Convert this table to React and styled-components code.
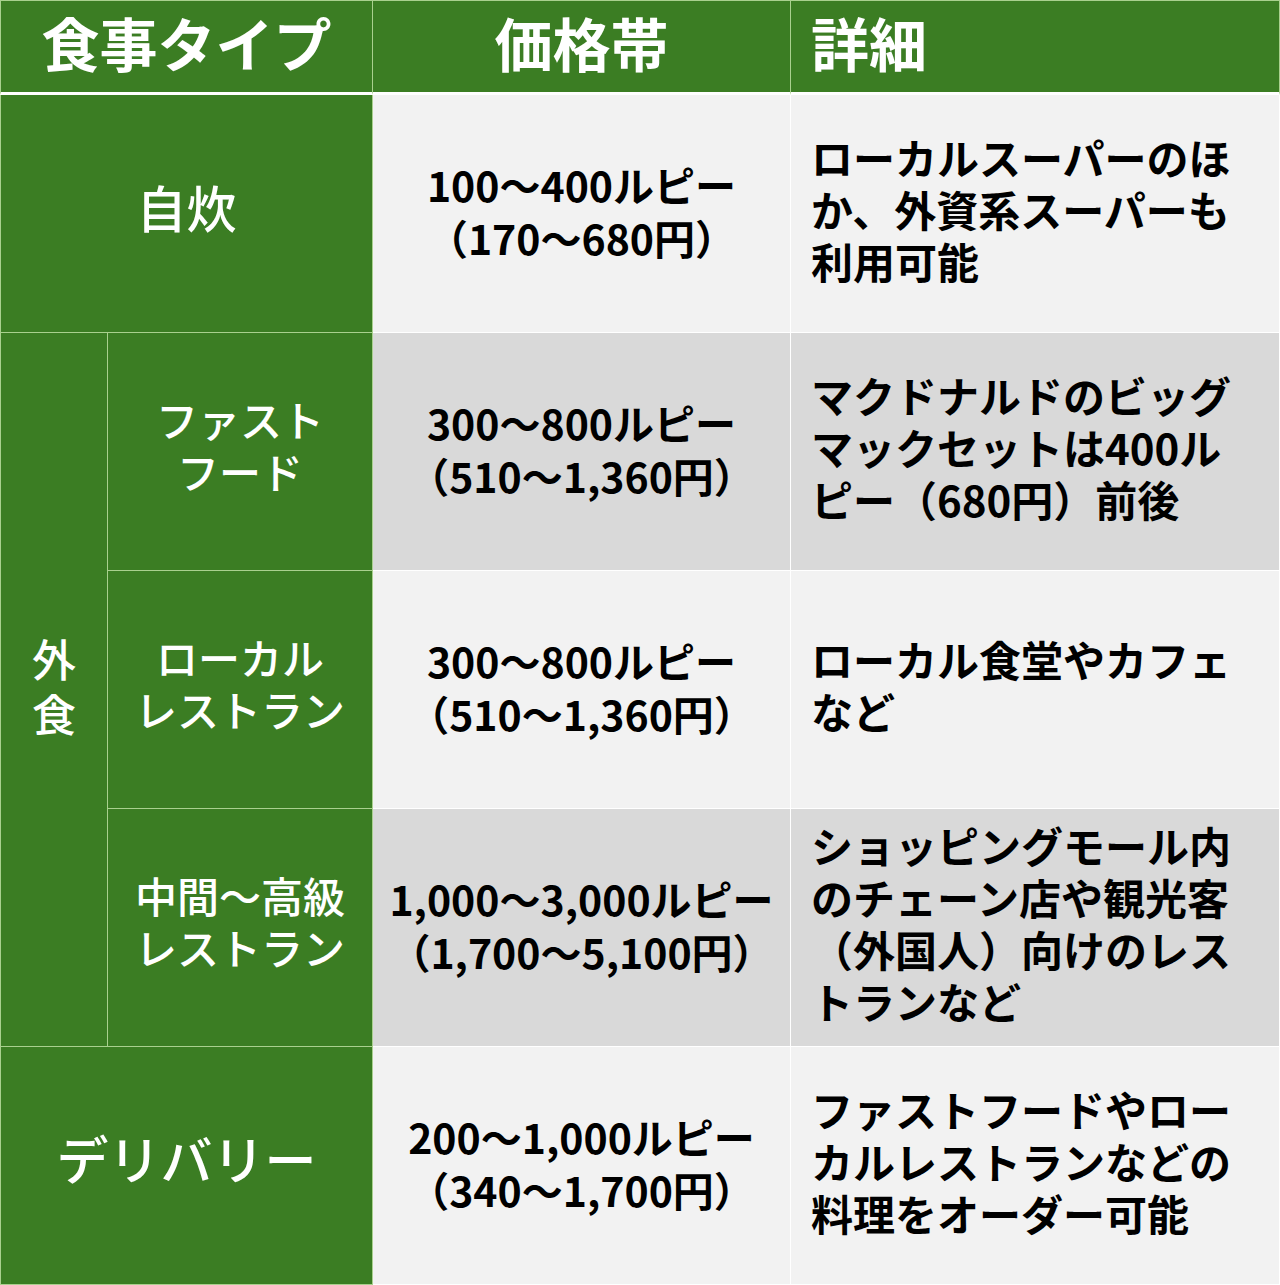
import React from "react";
import styled, { createGlobalStyle } from "styled-components";

const GREEN = "#3b7d23";
const GREEN_LINE = "#a9d08e";

const GlobalStyle = createGlobalStyle`
  html, body {
    margin: 0;
    padding: 0;
    background: #ffffff;
  }
  body {
    font-family: "Noto Sans CJK JP", "Noto Sans", sans-serif;
  }
`;

const Table = styled.div`
  display: grid;
  grid-template-columns: 108px 265px 418px 489px;
  grid-template-rows: 95px repeat(5, 238px);
  width: 1280px;
`;

const HeadCell = styled.div`
  box-sizing: border-box;
  grid-column: ${(props) => props.span || "auto"};
  background: ${GREEN};
  color: #fff;
  font-size: 58px;
  font-weight: 700;
  line-height: 1;
  display: flex;
  align-items: center;
  justify-content: ${(props) => (props.left ? "flex-start" : "center")};
  padding: ${(props) => (props.left ? "0 0 10px 20px" : "0 0 10px")};
  border-top: 1px solid ${GREEN_LINE};
  border-right: 1px solid ${GREEN_LINE};
  border-left: ${(props) => (props.first ? `1px solid ${GREEN_LINE}` : "none")};
  border-bottom: 3px solid #ffffff;
`;

const TypeCell = styled.div`
  box-sizing: border-box;
  grid-column: ${(props) => props.col || "auto"};
  grid-row: ${(props) => props.row || "auto"};
  background: ${GREEN};
  color: #fff;
  font-size: ${(props) => props.size || 42}px;
  font-weight: 500;
  line-height: ${(props) => props.lh || 52}px;
  text-align: center;
  display: flex;
  flex-direction: column;
  align-items: center;
  justify-content: center;
  padding-bottom: ${(props) => props.lift || 14}px;
  border-right: 1px solid ${GREEN_LINE};
  border-bottom: 1px solid ${GREEN_LINE};
  border-left: ${(props) => (props.first ? `1px solid ${GREEN_LINE}` : "none")};
`;

const DataCell = styled.div`
  box-sizing: border-box;
  background: ${(props) => (props.dark ? "#d9d9d9" : "#f2f2f2")};
  color: #000;
  font-weight: 700;
  display: flex;
  flex-direction: column;
  justify-content: center;
  border-right: 1px solid #ffffff;
  border-bottom: 1px solid #ffffff;
`;

const PriceCell = styled(DataCell)`
  align-items: center;
  text-align: center;
  font-size: 41px;
  line-height: 53px;
  padding-bottom: 6px;
`;

const DetailCell = styled(DataCell)`
  padding: 0 22px 10px 20px;
  font-size: 42px;
  line-height: 52px;
  word-break: break-all;
`;

const Line = styled.span`
  display: block;
  white-space: nowrap;
`;

const rows = [
  {
    price: ["100〜400ルピー", "（170〜680円）"],
    detail: "ローカルスーパーのほか、外資系スーパーも利用可能",
  },
  {
    name: ["ファスト", "フード"],
    price: ["300〜800ルピー", "（510〜1,360円）"],
    detail: "マクドナルドのビッグマックセットは400ルピー（680円）前後",
  },
  {
    name: ["ローカル", "レストラン"],
    price: ["300〜800ルピー", "（510〜1,360円）"],
    detail: "ローカル食堂やカフェなど",
  },
  {
    name: ["中間〜高級", "レストラン"],
    price: ["1,000〜3,000ルピー", "（1,700〜5,100円）"],
    detail: "ショッピングモール内のチェーン店や観光客（外国人）向けのレストランなど",
  },
  {
    price: ["200〜1,000ルピー", "（340〜1,700円）"],
    detail: "ファストフードやローカルレストランなどの料理をオーダー可能",
  },
];

function Lines({ items }) {
  return items.map((t) => <Line key={t}>{t}</Line>);
}

export default function App() {
  return (
    <>
      <GlobalStyle />
      <Table>
        <HeadCell span="span 2" first>
          食事タイプ
        </HeadCell>
        <HeadCell>価格帯</HeadCell>
        <HeadCell left>詳細</HeadCell>

        <TypeCell col="1 / span 2" row="2" size={50} lift={16} first>
          自炊
        </TypeCell>
        <PriceCell>
          <Lines items={rows[0].price} />
        </PriceCell>
        <DetailCell>{rows[0].detail}</DetailCell>

        <TypeCell col="1" row="3 / span 3" size={44} lh={55} lift={8} first>
          <Line>外</Line>
          <Line>食</Line>
        </TypeCell>

        {rows.slice(1, 4).map((r, i) => (
          <React.Fragment key={i}>
            <TypeCell col="2" row={`${i + 3}`}>
              <Lines items={r.name} />
            </TypeCell>
            <PriceCell dark={i % 2 === 0}>
              <Lines items={r.price} />
            </PriceCell>
            <DetailCell dark={i % 2 === 0}>{r.detail}</DetailCell>
          </React.Fragment>
        ))}

        <TypeCell col="1 / span 2" row="6" size={52} lift={16} first>
          デリバリー
        </TypeCell>
        <PriceCell>
          <Lines items={rows[4].price} />
        </PriceCell>
        <DetailCell>{rows[4].detail}</DetailCell>
      </Table>
    </>
  );
}
